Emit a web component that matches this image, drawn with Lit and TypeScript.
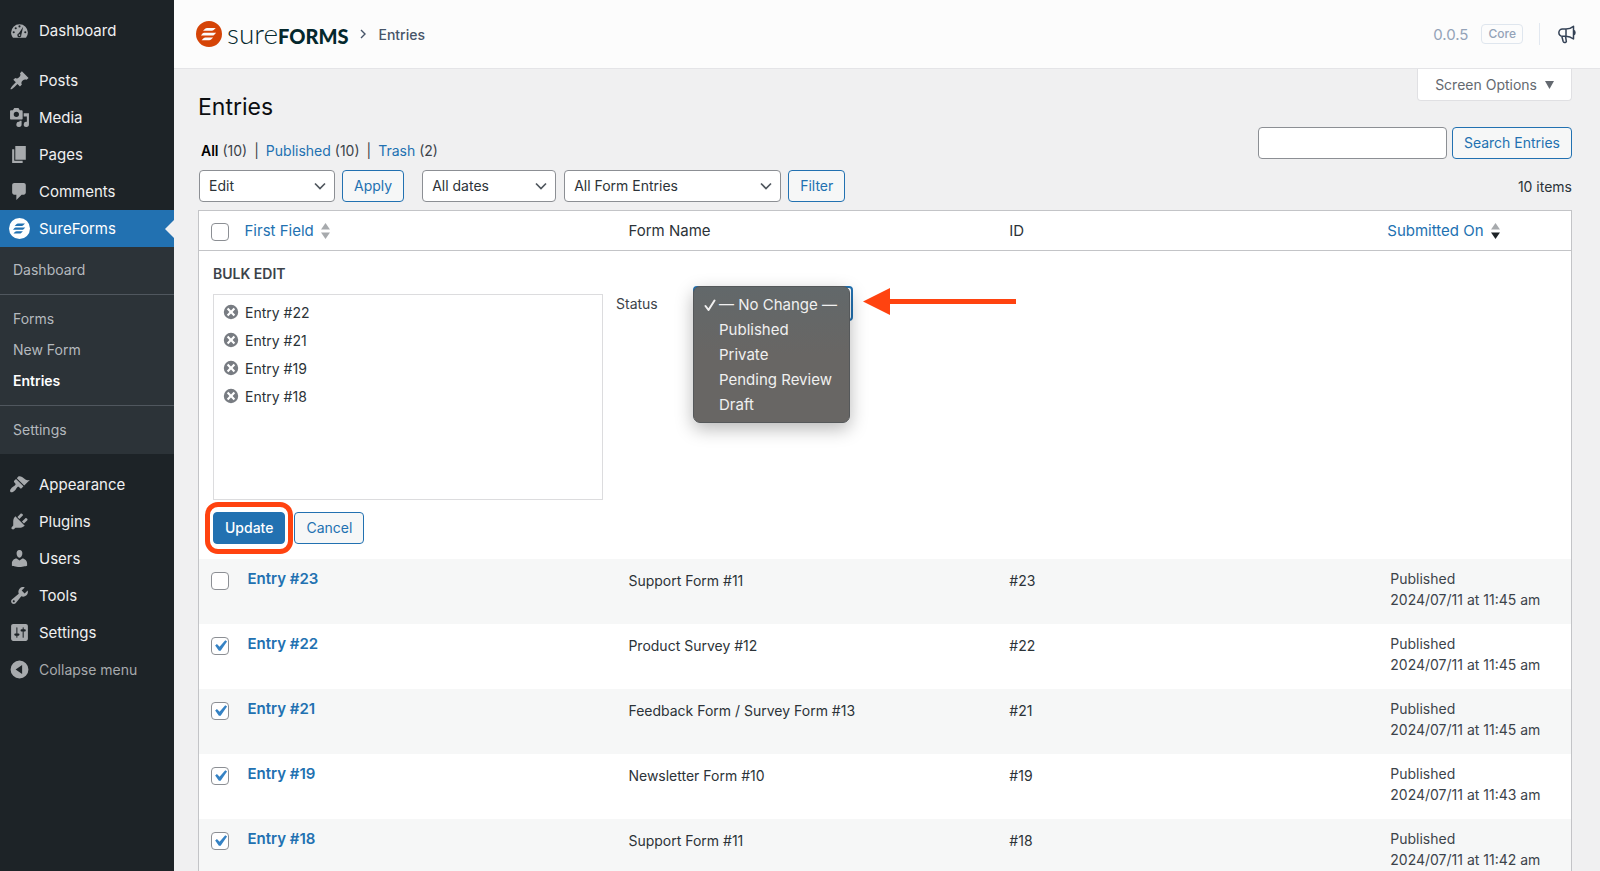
import { LitElement, html, css, svg, nothing } from "lit";
import { customElement, property, state } from "lit/decorators.js";
import { classMap } from "lit/directives/class-map.js";

const ICONS: Record<string, unknown> = {
  dashboard: svg`<path fill-rule="evenodd" d="M3.8 17h12.4A7.9 7.9 0 0 0 18 12a8 8 0 1 0-16 0c0 1.9.7 3.600 1.800 5zM10 5.100a1 1 0 1 1 0 2 1 1 0 0 1 0-2zM6.400 6.800a1 1 0 1 1 0 2 1 1 0 0 1 0-2zM4.500 10.700a1 1 0 1 1 0 2 1 1 0 0 1 0-2zM15.500 10.700a1 1 0 1 1 0 2 1 1 0 0 1 0-2zM13.500 6.500l-1.800 7.700a1.900 1.900 0 1 1-2.300-1.500zM10 13.600a.8.8 0 1 0 0 1.600.8.8 0 0 0 0-1.600z"/>`,
  posts: svg`<path d="M10.440 3.020l1.820-1.820 6.360 6.350-1.830 1.820c-1.050-.68-2.480-.57-3.410.36l-.75.75c-.92.93-1.040 2.350-.35 3.410l-1.830 1.820-2.410-2.410-2.800 2.790c-.42.42-3.380 2.710-3.800 2.290s1.860-3.390 2.280-3.810l2.790-2.790L4.100 9.360l1.830-1.820c1.050.69 2.480.57 3.400-.36l.75-.75c.93-.92 1.050-2.350.36-3.410z"/>`,
  media: svg`<path fill-rule="evenodd" d="M13 11V4c0-.55-.45-1-1-1h-1.670L9 1H5L3.670 3H2c-.55 0-1 .45-1 1v7c0 .55.45 1 1 1h10c.55 0 1-.45 1-1zM7 4.500a2.500 2.500 0 1 1 0 5 2.500 2.500 0 0 1 0-5zM14 6h5v10.500a2.500 2.500 0 1 1-2-2.450V9h-3zM10 14.050V13h2v3.500a2.500 2.500 0 1 1-2-2.450z"/>`,
  pages: svg`<path d="M6 15V2h10v13zM5 16h8v2H3V5h2z"/>`,
  comments: svg`<path d="M5 2h9c1.100 0 2 .9 2 2v7c0 1.100-.9 2-2 2h-2l-5 5v-5H5c-1.100 0-2-.9-2-2V4c0-1.100.9-2 2-2z"/>`,
  appearance: svg`<path d="M14.480 11.060L7.410 3.990l1.500-1.500c.5-.56 2.300-.47 3.510.32 1.210.8 1.430 1.280 2.910 2.100 1.180.64 2.450 1.260 4.450.85zM13.770 11.770L6.700 4.700 4.930 6.470c-.39.39-.39 1.020 0 1.410l1.060 1.060c.39.39.39 1.030 0 1.420-.6.6-1.430 1.110-2.210 1.690-.35.26-.7.53-1.010.84C1.430 14.230.4 16.080 1.400 17.070c.99 1 2.840-.03 4.180-1.360.31-.31.58-.66.85-1.020.57-.78 1.080-1.610 1.690-2.210.39-.39 1.020-.39 1.410 0l1.060 1.060c.39.39 1.020.39 1.410 0z"/>`,
  plugins: svg`<path d="M13.110 4.360L9.870 7.600 8 5.730l3.240-3.240c.35-.34 1.050-.2 1.560.32.52.51.66 1.210.31 1.550zM5.110 6.130l.91-1.120 9.010 9.010-1.190.84c-.71.71-2.630 1.160-3.820 1.160H6.140L4.900 17.260c-.59.59-1.540.59-2.120 0-.59-.58-.59-1.530 0-2.120l1.240-1.240v-3.880c0-1.130.4-3.190 1.090-3.890zM12.370 10.100l3.240-3.240c.34-.35 1.040-.21 1.550.31.52.51.66 1.210.31 1.550l-3.240 3.250z"/>`,
  users: svg`<path d="M10 9.250c-2.270 0-2.730-3.440-2.730-3.440C7 4.020 7.820 2 9.970 2c2.160 0 2.980 2.020 2.710 3.810 0 0-.41 3.440-2.680 3.440zM10 11.820L12.720 10c2.390 0 4.520 2.330 4.520 4.530v2.490s-3.650 1.130-7.240 1.130c-3.650 0-7.240-1.130-7.240-1.130v-2.490c0-2.250 1.940-4.480 4.470-4.480z"/>`,
  tools: svg`<path fill-rule="evenodd" d="M16.680 9.770c-1.340 1.340-3.300 1.670-4.950.99l-5.410 6.520c-.99.99-2.590.99-3.580 0s-.99-2.590 0-3.570l6.520-5.420c-.68-1.650-.35-3.610.99-4.950 1.280-1.280 3.120-1.620 4.720-1.060l-2.890 2.890 2.820 2.820 2.860-2.870c.53 1.580.18 3.390-1.080 4.650zM3.810 16.210c.4.39 1.040.39 1.430 0 .4-.4.4-1.040 0-1.430-.39-.4-1.030-.4-1.430 0-.39.39-.39 1.030 0 1.430z"/>`,
  settings: svg`<path fill-rule="evenodd" d="M18 16V4c0-1.100-.9-2-2-2H4c-1.100 0-2 .9-2 2v12c0 1.100.9 2 2 2h12c1.100 0 2-.9 2-2zM8 11h1a1 1 0 0 1 0 2H8v1.500a.5.5 0 0 1-1 0V13H6a1 1 0 0 1 0-2h1V5.500a.5.5 0 0 1 1 0zM13 9h-1a1 1 0 0 1 0-2h1V5.500a.5.5 0 0 1 1 0V7h1a1 1 0 0 1 0 2h-1v5.500a.5.5 0 0 1-1 0z"/>`,
  collapse: svg`<path fill-rule="evenodd" d="M10 1.500a8.500 8.500 0 1 1 0 17 8.500 8.500 0 0 1 0-17zM12.500 5.800L6.300 10l6.200 4.200z"/>`,
  sureforms: svg`<path fill-rule="evenodd" d="M10 0a10 10 0 1 1 0 20 10 10 0 0 1 0-20zM8.500 5.300h6.700l-1.600 1.700q-.6.500-1.400.5H5.400l1.600-1.600q.6-.6 1.500-.6zM6.300 9h9.200l-1.600 1.700q-.6.500-1.400.5H3.800l1.200-1.500q.5-.7 1.300-.7zM7.200 12.600h6l-1.600 1.700q-.6.500-1.400.5H4.300l1.500-1.600q.6-.6 1.400-.6z"/>`,
  remove: svg`<path fill-rule="evenodd" d="M10 1a9 9 0 1 1 0 18 9 9 0 0 1 0-18zM13.300 4.800L10 8 6.700 4.800 4.800 6.700 8 10l-3.200 3.300 1.900 1.900L10 12l3.300 3.200 1.900-1.900L12 10l3.200-3.300z"/>`,
};

const icon = (name: string) =>
  html`<svg class="icon" viewBox="0 0 20 20" fill="currentColor" aria-hidden="true">${ICONS[name]}</svg>`;

const TEXT = css`
  :host { box-sizing: border-box; }
  * { box-sizing: border-box; }
  a { color: inherit; text-decoration: none; }
  ul { list-style: none; margin: 0; padding: 0; }
  .icon { display: block; flex: none; }
`;

@customElement("admin-menu")
class AdminMenu extends LitElement {
  static styles = [
    TEXT,
    css`
      :host { display: block; background: #1d2327; color: #f0f0f1; font-size: 15px; line-height: 20px; padding-top: 12px; }
      .group { margin-bottom: 12px; }
      .first { margin-bottom: 13px; }
      .item { display: flex; align-items: center; gap: 9px; height: 37px; padding-left: 9px; position: relative; }
      .item .icon { width: 21px; height: 21px; color: #a7aaad; }
      .current { background: #2271b1; color: #fff; }
      .current .icon { color: #fff; }
      .current::after { content: ""; position: absolute; right: 0; top: 50%; border: 9px solid transparent; border-right-color: #f0f0f1; border-left: 0; margin-top: -9px; }
      .sub { background: #2c3338; color: #b4b9be; font-size: 14px; }
      .section { padding: 9px 0 8px; border-top: 1px solid #50575e; }
      .section:first-child { border-top: 0; padding-top: 8px; }
      .sub a { display: block; padding: 5px 13px; height: 31px; }
      .sub .here { color: #fff; font-weight: 600; }
      .collapse { font: inherit; font-size: 14px; color: #a7aaad; background: none; border: 0; width: 100%; padding-right: 0; }
    `,
  ];

  private item(name: string, label: string, current = false) {
    return html`<li><a href="#" class=${classMap({ item: true, current })}>${icon(name)}<span>${label}</span></a></li>`;
  }

  render() {
    return html`
      <nav aria-label="Main menu">
        <ul class="first">${this.item("dashboard", "Dashboard")}</ul>
        <ul>
          ${this.item("posts", "Posts")} ${this.item("media", "Media")} ${this.item("pages", "Pages")}
          ${this.item("comments", "Comments")} ${this.item("sureforms", "SureForms", true)}
        </ul>
        <div class="sub group">
          <div class="section"><a href="#">Dashboard</a></div>
          <div class="section">
            <a href="#">Forms</a><a href="#">New Form</a><a href="#" class="here" aria-current="page">Entries</a>
          </div>
          <div class="section"><a href="#">Settings</a></div>
        </div>
        <ul>
          ${this.item("appearance", "Appearance")} ${this.item("plugins", "Plugins")} ${this.item("users", "Users")}
          ${this.item("tools", "Tools")} ${this.item("settings", "Settings")}
        </ul>
        <button class="item collapse" type="button">${icon("collapse")}<span>Collapse menu</span></button>
      </nav>
    `;
  }
}

@customElement("plugin-header")
class PluginHeader extends LitElement {
  static styles = [
    TEXT,
    css`
      :host { display: flex; align-items: center; justify-content: space-between; height: 69px; padding: 0 23px 0 22px; background: #fcfcfc; border-bottom: 1px solid #e4e4e7; }
      .side { display: flex; align-items: center; }
      .mark { width: 26px; height: 26px; color: #d54407; }
      .word { display: flex; align-items: baseline; margin-left: 5px; font-family: Lato, sans-serif; color: #04282d; line-height: 30px; }
      .thin { font-size: 28px; font-weight: 300; }
      .bold { font-size: 20px; font-weight: 900; }
      .chevron { width: 8px; height: 10px; margin: 0 11px; color: #475569; }
      .crumb { font-size: 14px; font-weight: 500; color: #475569; }
      .version { font-size: 15px; color: #94a3b8; }
      .badge { margin-left: 13px; border: 1px solid #dfe6ee; border-radius: 4px; padding: 0 6px; font-size: 12px; line-height: 18px; font-weight: 500; color: #94a3b8; }
      .rule { width: 1px; height: 22px; margin: 0 18px 0 16px; background: #e2e8f0; }
      .news { display: flex; border: 0; padding: 0; background: none; color: #334155; }
      .news svg { width: 19px; height: 19px; }
    `,
  ];

  render() {
    return html`
      <div class="side">
        <svg class="icon mark" viewBox="0 0 20 20" fill="currentColor" aria-hidden="true">${ICONS.sureforms}</svg>
        <span class="word"><span class="thin">sure</span><span class="bold">FORMS</span></span>
        <svg class="chevron" viewBox="0 0 8 10" fill="none" stroke="currentColor" stroke-width="1.4" aria-hidden="true"><path d="M2 1l4 4-4 4" /></svg>
        <span class="crumb">Entries</span>
      </div>
      <div class="side">
        <span class="version">0.0.5</span>
        <span class="badge">Core</span>
        <span class="rule"></span>
        <button class="news" type="button" aria-label="What's new">
          <svg viewBox="0 0 19 19" fill="none" stroke="currentColor" stroke-width="1.5" stroke-linejoin="round" stroke-linecap="round" aria-hidden="true">
            <path d="M8 4H4.500a3.600 3.600 0 0 0 0 7.300H8zM8 4c3 0 5.300-1 7.500-2.700v12.700C13.300 12.300 11 11.300 8 11.300M15.500 5.300a2.600 2.600 0 0 1 0 4.700M3.800 11.300l1.300 5q.4 1.200 1.500 1.100h.8q1.200-.2.900-1.400L7.500 11.300" />
          </svg>
        </button>
      </div>
    `;
  }
}

interface Entry { id: number; form: string; time: string; checked: boolean; }

@customElement("entries-screen")
class EntriesScreen extends LitElement {
  @property({ attribute: false }) entries: Entry[] = [];
  @state() private status = "— No Change —";

  static styles = [
    TEXT,
    css`
      :host { display: block; padding: 0 28px 0 24px; color: #3c434a; font-size: 14px; line-height: 21px; }
      a, .link { color: #2271b1; }
      .top { display: flex; justify-content: space-between; align-items: flex-start; }
      h1 { margin: 22px 0 0; font-size: 23px; line-height: 32px; font-weight: 400; color: #0c0e10; }
      button, select, .search { font: inherit; line-height: 20px; height: 32px; border-radius: 4px; }
      .options { color: #646970; background: #fff; border: 1px solid #e0e0e3; border-top: 0; border-radius: 0 0 4px 4px; padding: 0 17px; display: flex; align-items: center; gap: 8px; }
      .tri { width: 9px; height: 8px; }
      .btn { border: 1px solid #2271b1; color: #2271b1; background: #f6f7f7; padding: 0 11px; }
      .primary { background: #2271b1; color: #fff; font-weight: 500; }
      select { appearance: none; border: 1px solid #8c8f94; color: #2c3338; padding: 0 32px 0 9px; background: #fff url("data:image/svg+xml,%3Csvg xmlns='http://www.w3.org/2000/svg' width='12' height='8' fill='none' stroke='%2350575e' stroke-width='1.700'%3E%3Cpath d='M1 1.500l5 5 5-5'/%3E%3C/svg%3E") no-repeat right 8px center; }
      .search { width: 189px; border: 1px solid #8c8f94; background: #fff; padding: 0 8px; }
      .filters { display: flex; justify-content: space-between; align-items: flex-start; margin-top: 4px; }
      .views { display: flex; gap: 7px; padding: 13px 0 0 3px; }
      .views .all { color: #000; font-weight: 600; }
      .nav { display: flex; align-items: center; gap: 8px; margin: 9px 0 8px; }
      .nav select:first-of-type { width: 136px; margin-left: 1px; }
      .nav .dates { width: 134px; margin-left: 10px; }
      .nav .forms { width: 217px; }
      .nav .apply { margin-left: -1px; }
      .nav .count { margin-left: auto; color: #2c3338; }
      .find { display: flex; gap: 5px; }
      table { width: 100%; table-layout: fixed; border-collapse: collapse; border: 1px solid #c3c4c7; background: #fff; }
      .c-check { width: 38px; }
      .c-date { width: 14%; }
      th { text-align: left; font-weight: 400; font-size: 15px; color: #2c3338; padding: 0 11px; height: 40px; border-bottom: 1px solid #c3c4c7; }
      th.sort { padding: 0 8px; }
      .sortlink { display: flex; align-items: center; gap: 7px; }
      .sortlink svg { width: 9px; height: 16px; }
      td { padding: 9px 11px; vertical-align: top; height: 65px; }
      td.mid { padding-top: 11px; color: #2c3338; }
      .pick { padding: 13px 0 0 12px; }
      th.pick { padding-top: 3px; }
      .odd { background: #f6f7f7; }
      .name { font-size: 15px; font-weight: 600; }
      input[type="checkbox"] { appearance: none; display: block; margin: 0; width: 18px; height: 18px; border: 1px solid #8c8f94; border-radius: 4px; background: #fff; }
      input[type="checkbox"]:checked::before { content: ""; display: block; width: 22px; height: 22px; margin: -3px; background: #3582c4; clip-path: polygon(74% 24%, 82% 30%, 53% 72%, 45% 72%, 28% 48%, 36% 41%, 48% 53%); }
      td.bulk { padding: 12px 14px 15px; height: auto; }
      .bulk h2 { margin: 0 0 10px; font-size: 14px; line-height: 21px; font-weight: 600; color: #3c434a; }
      .fields { display: flex; align-items: flex-start; gap: 13px; }
      .titles { width: 390px; height: 206px; border: 1px solid #dcdcde; padding: 3px 9px; color: #2c3338; }
      .titles li { display: flex; align-items: center; gap: 6px; height: 28px; }
      .remove { display: flex; height: auto; border: 0; padding: 0; background: none; color: #787c82; }
      .remove .icon { width: 16px; height: 16px; }
      .status { display: flex; align-items: flex-start; margin-top: -1px; }
      .status label { width: 77px; }
      .picker { position: relative; }
      .picker select { display: block; width: 160px; height: 35px; margin-top: -7px; border: 2px solid #2271b1; }
      .menu { position: absolute; left: 0; top: -7px; width: 157px; padding: 5px 0; background: linear-gradient(#62686a, #686664 50%); border: 1px solid #55585a; border-radius: 7px; box-shadow: 0 6px 18px rgb(0 0 0 / 28%); color: #f0f0f0; font-size: 15px; line-height: 25px; }
      .menu li { position: relative; padding-left: 25px; white-space: nowrap; }
      .tick { position: absolute; left: 10px; top: 7px; width: 12px; height: 12px; }
      .pointer { position: absolute; left: 170px; top: -5px; width: 153px; height: 27px; }
      .actions { display: flex; gap: 9px; margin-top: 12px; }
      .ring { position: relative; }
      .ring::after { content: ""; position: absolute; inset: -10px -8px; border: 5px solid #ff4310; border-radius: 13px; pointer-events: none; }
    `,
  ];

  private arrows(down: string) {
    return html`<svg viewBox="0 0 9 16" aria-hidden="true"><path fill="#a7aaad" d="M4.500 0L9 6.500H0z" /><path fill=${down} d="M4.500 16L9 9.500H0z" /></svg>`;
  }

  private row(e: Entry, i: number) {
    return html`
      <tr class=${i % 2 === 0 ? "odd" : nothing}>
        <td class="pick"><input type="checkbox" aria-label="Select Entry #${e.id}" .checked=${e.checked} /></td>
        <td><a class="name" href="#">Entry #${e.id}</a></td>
        <td class="mid">${e.form}</td>
        <td class="mid">#${e.id}</td>
        <td>Published<br />2024/07/11 at ${e.time}</td>
      </tr>
    `;
  }

  render() {
    const statuses = ["— No Change —", "Published", "Private", "Pending Review", "Draft"];
    return html`
      <div class="top">
        <h1>Entries</h1>
        <button class="options" type="button">
          Screen Options
          <svg class="tri" viewBox="0 0 9 8" fill="currentColor" aria-hidden="true"><path d="M0 0h9L4.500 8z" /></svg>
        </button>
      </div>
      <div class="filters">
        <div class="views">
          <span><a class="all" href="#">All</a> (10)</span><span>|</span>
          <span><a href="#">Published</a> (10)</span><span>|</span>
          <span><a href="#">Trash</a> (2)</span>
        </div>
        <div class="find">
          <input class="search" type="search" aria-label="Search Entries" />
          <button class="btn" type="button">Search Entries</button>
        </div>
      </div>
      <div class="nav">
        <select aria-label="Bulk action"><option>Edit</option></select>
        <button class="btn apply" type="button">Apply</button>
        <select class="dates" aria-label="Filter by date"><option>All dates</option></select>
        <select class="forms" aria-label="Filter by form"><option>All Form Entries</option></select>
        <button class="btn apply" type="button">Filter</button>
        <span class="count">10 items</span>
      </div>
      <table>
        <colgroup><col class="c-check" /><col /><col /><col /><col class="c-date" /></colgroup>
        <thead>
          <tr>
            <th class="pick"><input type="checkbox" aria-label="Select all" /></th>
            <th class="sort"><a class="sortlink" href="#">First Field ${this.arrows("#a7aaad")}</a></th>
            <th>Form Name</th>
            <th>ID</th>
            <th class="sort"><a class="sortlink" href="#">Submitted On ${this.arrows("#1d2327")}</a></th>
          </tr>
        </thead>
        <tbody>
          <tr>
            <td class="bulk" colspan="5">
              <h2>BULK EDIT</h2>
              <div class="fields">
                <ul class="titles">
                  ${this.entries.filter((e) => e.checked).map(
                    (e) => html`<li>
                      <button class="remove" type="button" aria-label="Remove Entry #${e.id}">${icon("remove")}</button>
                      Entry #${e.id}
                    </li>`
                  )}
                </ul>
                <div class="status">
                  <label for="status">Status</label>
                  <div class="picker">
                    <select id="status">${statuses.map((s) => html`<option>${s}</option>`)}</select>
                    <ul class="menu" role="listbox" aria-label="Status">
                      ${statuses.map(
                        (s) => html`<li role="option" aria-selected=${s === this.status} @click=${() => (this.status = s)}>
                          ${s === this.status
                            ? html`<svg class="tick" viewBox="0 0 12 12" fill="none" stroke="currentColor" stroke-width="2" stroke-linecap="round" stroke-linejoin="round" aria-hidden="true"><path d="M1.500 7l3 4L10.500 1.500" /></svg>`
                            : nothing}${s}
                        </li>`
                      )}
                    </ul>
                    <svg class="pointer" viewBox="0 0 153 27" fill="#ff4310" aria-hidden="true"><path d="M0 13.500L27 0v11h126v5H27v11z" /></svg>
                  </div>
                </div>
              </div>
              <div class="actions">
                <span class="ring"><button class="btn primary" type="button">Update</button></span>
                <button class="btn" type="button">Cancel</button>
              </div>
            </td>
          </tr>
          ${this.entries.map((e, i) => this.row(e, i))}
        </tbody>
      </table>
    `;
  }
}

@customElement("app-root")
class AppRoot extends LitElement {
  static styles = css`
    :host { display: grid; grid-template-columns: 174px minmax(0, 1fr); height: 100vh; overflow: hidden; background: #f0f0f1; font-family: Inter, "Liberation Sans", sans-serif; }
    .content { overflow-y: auto; scrollbar-width: none; }
  `;

  private entries: Entry[] = [
    { id: 23, form: "Support Form #11", time: "11:45 am", checked: false },
    { id: 22, form: "Product Survey #12", time: "11:45 am", checked: true },
    { id: 21, form: "Feedback Form / Survey Form #13", time: "11:45 am", checked: true },
    { id: 19, form: "Newsletter Form #10", time: "11:43 am", checked: true },
    { id: 18, form: "Support Form #11", time: "11:42 am", checked: true },
  ];

  render() {
    return html`
      <admin-menu></admin-menu>
      <main class="content">
        <plugin-header></plugin-header>
        <entries-screen .entries=${this.entries}></entries-screen>
      </main>
    `;
  }
}
